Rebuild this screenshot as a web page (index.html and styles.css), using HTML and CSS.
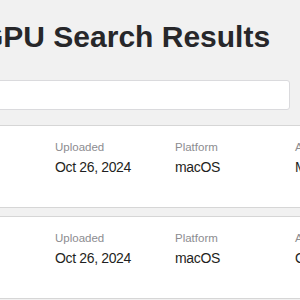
FILE: index.html
```html
<!DOCTYPE html>
<html lang="en">
<head>
<meta charset="utf-8">
<title>GPU Search Results</title>
<link rel="stylesheet" href="styles.css">
</head>
<body>
<main class="page">
  <h1 class="title">GPU Search Results</h1>
  <input class="search" type="text" aria-label="Search">
  <div class="results">
    <article class="card">
      <div class="field"><span class="label">Uploaded</span><span class="value">Oct 26, 2024</span></div>
      <div class="field"><span class="label">Platform</span><span class="value">macOS</span></div>
      <div class="field"><span class="label">API</span><span class="value">Metal</span></div>
    </article>
    <article class="card">
      <div class="field"><span class="label">Uploaded</span><span class="value">Oct 26, 2024</span></div>
      <div class="field"><span class="label">Platform</span><span class="value">macOS</span></div>
      <div class="field"><span class="label">API</span><span class="value">OpenCL</span></div>
    </article>
  </div>
</main>
</body>
</html>
```
FILE: styles.css
```css
html, body {
  margin: 0;
  padding: 0;
  background: #f1f1f1;
  overflow: hidden;
  font-family: "Liberation Sans", Arial, Helvetica, sans-serif;
}

.page {
  margin-left: -17px;
  padding-right: 10px;
}

.title {
  margin: 20px 0 0 -3px;
  font-size: 30px;
  line-height: 34px;
  font-weight: 700;
  color: #27272a;
  white-space: nowrap;
}

.search {
  display: block;
  box-sizing: border-box;
  width: 100%;
  height: 30px;
  margin: 26px 0 0;
  background: #ffffff;
  border: 1px solid #dadadd;
  border-radius: 3px;
}

.results {
  margin: 15px -120px 0 0;
  display: flex;
  flex-direction: column;
  gap: 8px;
}

.card {
  display: grid;
  grid-template-columns: repeat(3, 120px);
  padding: 14px 0 31px 72px;
  background: #ffffff;
  border-top: 1px solid #d6d6d6;
  border-bottom: 1px solid #d6d6d6;
}

.field {
  display: flex;
  flex-direction: column;
  gap: 3px;
}

.label {
  font-size: 11.5px;
  line-height: 15px;
  color: #8c8c90;
}

.value {
  font-size: 14px;
  line-height: 18px;
  letter-spacing: -0.35px;
  color: #1f1f22;
}
```
